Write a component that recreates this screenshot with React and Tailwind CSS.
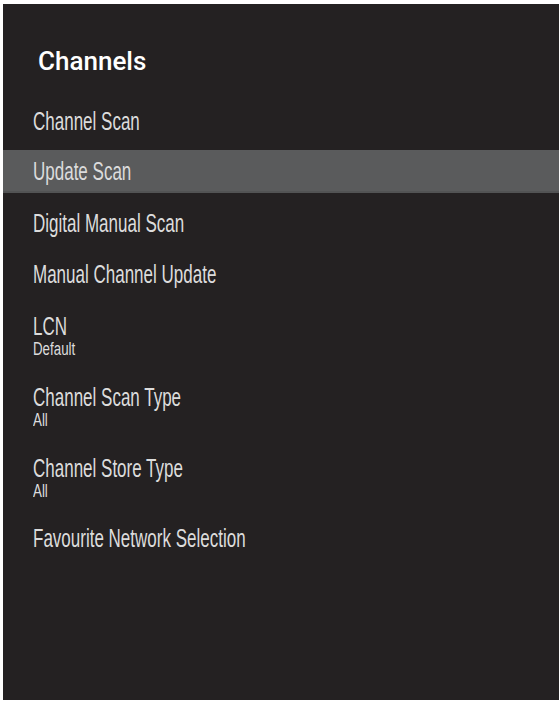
import React from "react";

const items = [
  { label: "Channel Scan" },
  { label: "Update Scan", active: true },
  { label: "Digital Manual Scan" },
  { label: "Manual Channel Update" },
  { label: "LCN", value: "Default" },
  { label: "Channel Scan Type", value: "All" },
  { label: "Channel Store Type", value: "All" },
  { label: "Favourite Network Selection" },
];

const condensed = { fontFamily: '"Liberation Sans", Arial, sans-serif' };

function MenuItem({ label, value, active }) {
  return (
    <div
      className={`flex flex-col justify-center pl-[30px] ${value ? "h-[63px]" : "h-[43px]"} ${
        active ? "bg-[#5a5b5c] border-b-2 border-[#525354]" : ""
      }`}
      style={condensed}
    >
      <span className="inline-block origin-left scale-x-[0.68] text-[25px] leading-[28px] text-[#dcdcdc] whitespace-nowrap">
        {label}
      </span>
      {value && (
        <span className="inline-block origin-left scale-x-[0.74] text-[18px] leading-[18px] text-[#dcdcdc] whitespace-nowrap">
          {value}
        </span>
      )}
    </div>
  );
}

export default function App() {
  return (
    <div className="w-[560px] h-[705px] bg-white pt-[4px] pb-[5px] pl-[3px] pr-[1px]">
      <div className="h-full bg-[#242122] flex flex-col">
        <h1
          className="pl-[35px] pt-[43px] pb-[24px] text-[26px] leading-[28px] font-medium text-white"
          style={{ fontFamily: "Roboto, Arial, sans-serif" }}
        >
          Channels
        </h1>
        <div className="flex flex-col gap-[8px]">
          {items.map((it) => (
            <MenuItem key={it.label} {...it} />
          ))}
        </div>
      </div>
    </div>
  );
}
